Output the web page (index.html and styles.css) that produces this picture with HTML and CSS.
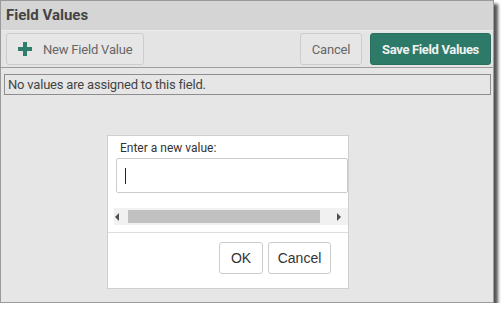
FILE: index.html
```html
<!DOCTYPE html>
<html>
<head>
<meta charset="utf-8">
<link rel="stylesheet" href="styles.css">
</head>
<body>
<div class="window">
  <div class="header">Field Values</div>
  <div class="toolbar">
    <button class="btn btn-new"><svg class="plus" width="16" height="16" viewBox="0 0 16 16"><path d="M6 1h4v5h5v4h-5v5h-4v-5h-5v-4h5z" fill="#2f7d6c"/></svg>New Field Value</button>
    <div class="spacer"></div>
    <button class="btn btn-cancel">Cancel</button>
    <button class="btn btn-save">Save Field Values</button>
  </div>
  <div class="content">
    <div class="message">No values are assigned to this field.</div>
    <div class="dialog">
      <div class="dlg-body">
        <div class="label">Enter a new value:</div>
        <div class="input"><span class="caret"></span></div>
      </div>
      <div class="scrollbar">
        <span class="arr arr-left"></span>
        <span class="thumb"></span>
        <span class="arr arr-right"></span>
      </div>
      <div class="dlg-foot">
        <button class="dbtn dbtn-ok">OK</button>
        <button class="dbtn dbtn-cancel">Cancel</button>
      </div>
    </div>
  </div>
</div>
</body>
</html>
```
FILE: styles.css
```css
html, body { margin: 0; padding: 0; background: #ffffff; }
body { font-family: Roboto, "Liberation Sans", sans-serif; }
.window {
  width: 494px;
  height: 303px;
  box-sizing: border-box;
  border: 1px solid #9a9a9a;
  background: #e6e6e6;
  box-shadow: 4px 4px 3px #555;
  display: flex;
  flex-direction: column;
}
.header {
  height: 30px;
  box-sizing: border-box;
  background: #d5d5d5;
  border-bottom: 1px solid #ececec;
  font-size: 15px;
  font-weight: 700;
  color: #444;
  padding: 5px 0 0 5px;
}
.toolbar {
  height: 37px;
  box-sizing: border-box;
  display: flex;
  align-items: flex-start;
  padding: 2px 2px 0 5px;
  background: #e4e4e4;
  border-bottom: 1px solid #9c9c9c;
  gap: 8px;
}
.spacer { flex: 1; }
.btn {
  height: 32px;
  box-sizing: border-box;
  border: 1px solid #cdcdcd;
  border-radius: 3px;
  background: #e6e6e6;
  font-family: Roboto, "Liberation Sans", sans-serif;
  font-size: 13px;
  letter-spacing: -0.2px;
  color: #666;
  display: flex;
  align-items: center;
  padding: 0;
}
.btn-new { width: 138px; padding-left: 10px; gap: 10px; }
.plus { display: block; }
.btn-cancel { width: 62px; justify-content: center; }
.btn-save {
  width: 121px;
  justify-content: center;
  background: #2e7a69;
  border-color: #2a6e5f;
  color: #f2f2f2;
  font-weight: 700;
  letter-spacing: -0.35px;
}
.content {
  flex: 1;
  padding: 6px 2px 0 3px;
}
.message {
  height: 21px;
  box-sizing: border-box;
  border: 1px solid #8e8e8e;
  font-size: 13px;
  letter-spacing: -0.2px;
  color: #444;
  padding: 1px 0 0 3px;
  line-height: 17px;
}
.dialog {
  width: 242px;
  height: 154px;
  box-sizing: border-box;
  margin: 40px 0 0 103px;
  background: #fff;
  border: 1px solid #cfcfcf;
  display: flex;
  flex-direction: column;
}
.dlg-body { padding: 5px 0 0 8px; height: 72px; box-sizing: border-box; }
.label { font-size: 12px; color: #333; line-height: 15px; margin-left: 4px; }
.input {
  margin-top: 2px;
  height: 35px;
  box-sizing: border-box;
  border: 1px solid #cccccc;
  border-radius: 2px;
  display: flex;
  align-items: center;
  padding-left: 8px;
}
.caret { width: 1px; height: 16px; background: #222; }
.scrollbar {
  height: 17px;
  background: #f1f1f1;
  margin-left: 6px;
  display: flex;
  align-items: center;
  padding: 0 0 0 1px;
}
.arr { width: 0; height: 0; border-top: 4px solid transparent; border-bottom: 4px solid transparent; }
.arr-left { border-right: 4px solid #505050; margin-right: 9px; }
.arr-right { border-left: 4px solid #505050; margin-left: 17px; }
.thumb { width: 192px; height: 13px; background: #c1c1c1; }
.dlg-foot {
  margin-top: 7px;
  border-top: 1px solid #dddddd;
  display: flex;
  justify-content: flex-end;
  padding: 9px 17px 0 0;
  gap: 5px;
}
.dbtn {
  height: 32px;
  box-sizing: border-box;
  border: 1px solid #cccccc;
  border-radius: 3px;
  background: #fff;
  font-family: "Liberation Sans", Arial, sans-serif;
  font-size: 14px;
  color: #333;
  padding: 0;
}
.dbtn-ok { width: 44px; }
.dbtn-cancel { width: 63px; }
```
